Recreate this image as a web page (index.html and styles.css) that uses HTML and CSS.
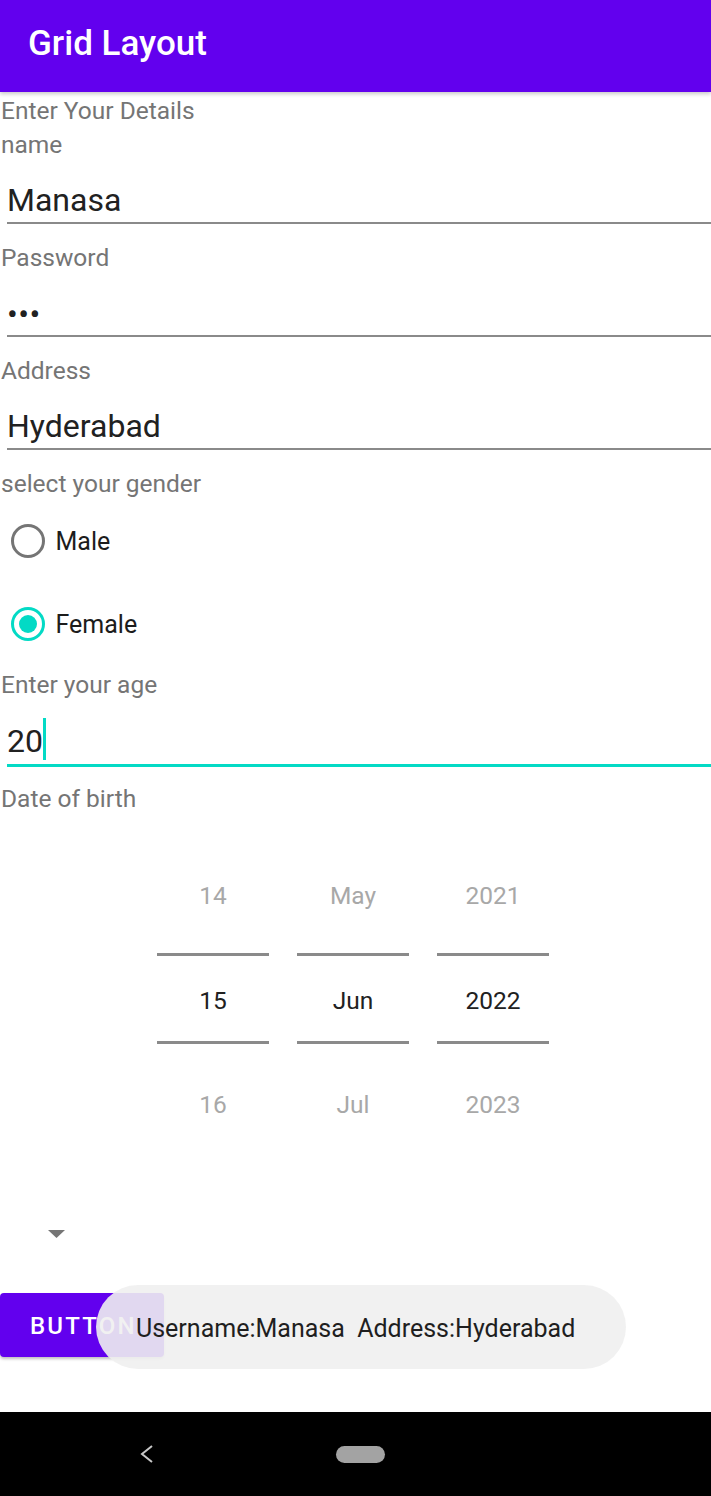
FILE: index.html
```html
<!DOCTYPE html>
<html lang="en">
<head>
<meta charset="utf-8">
<title>Grid Layout</title>
<link rel="stylesheet" href="styles.css">
</head>
<body>
<div class="screen">
  <header class="appbar"><h1 class="title">Grid Layout</h1></header>
  <main class="form">
    <p class="label label-first">Enter Your Details</p>
    <p class="label">name</p>
    <div class="field"><span class="field-text">Manasa</span></div>
    <p class="label">Password</p>
    <div class="field"><span class="field-text dots">•••</span></div>
    <p class="label">Address</p>
    <div class="field"><span class="field-text">Hyderabad</span></div>
    <p class="label">select your gender</p>
    <div class="radio-group">
      <div class="radio"><span class="radio-circle"></span><span class="radio-text">Male</span></div>
      <div class="radio radio-second"><span class="radio-circle checked"></span><span class="radio-text">Female</span></div>
    </div>
    <p class="label">Enter your age</p>
    <div class="field field-focused"><span class="field-text">20</span><span class="cursor"></span></div>
    <p class="label">Date of birth</p>
    <div class="picker">
      <div class="picker-col">
        <div class="cell cell-top">14</div>
        <div class="cell cell-mid">15</div>
        <div class="cell cell-bottom">16</div>
      </div>
      <div class="picker-col">
        <div class="cell cell-top">May</div>
        <div class="cell cell-mid">Jun</div>
        <div class="cell cell-bottom">Jul</div>
      </div>
      <div class="picker-col">
        <div class="cell cell-top">2021</div>
        <div class="cell cell-mid">2022</div>
        <div class="cell cell-bottom">2023</div>
      </div>
    </div>
    <div class="spinner">
      <svg width="17" height="8" viewBox="0 0 17 8"><path d="M0 0 L17 0 L8.5 8 Z" fill="#757575"/></svg>
    </div>
    <div class="actions">
      <div class="btn">BUTTON</div>
      <div class="toast">Username:Manasa&nbsp; Address:Hyderabad</div>
    </div>
  </main>
  <nav class="navbar">
    <svg class="nav-back" width="14" height="20" viewBox="0 0 14 20"><path d="M12 2 L2 10 L12 18" fill="none" stroke="#c8c8c8" stroke-width="2"/></svg>
    <span class="nav-home"></span>
  </nav>
</div>
</body>
</html>
```
FILE: styles.css
```css
html, body {
  margin: 0;
  padding: 0;
  background: #ffffff;
}
.screen {
  width: 711px;
  height: 1496px;
  overflow: hidden;
  font-family: Roboto, "Noto Sans", sans-serif;
  display: flex;
  flex-direction: column;
}
.appbar {
  position: relative;
  z-index: 2;
  height: 92px;
  background: #6200ee;
  box-shadow: 0 2px 4px rgba(0, 0, 0, 0.22);
  flex: none;
}
.title {
  margin: 0;
  padding-left: 28px;
  font-size: 35px;
  font-weight: 500;
  line-height: 87px;
  color: #ffffff;
}
.form {
  flex: none;
}
.label {
  margin: 0;
  height: 34px;
  line-height: 34px;
  font-size: 24.5px;
  color: #757575;
  padding-left: 1px;
}
.label-first {
  margin-top: 2px;
}
.field {
  margin: 0 0 17px 7px;
  padding: 18px 0 2px 0;
  border-bottom: 2px solid #8a8a8a;
  height: 40px;
  line-height: 40px;
  font-size: 32px;
  color: #212121;
}
.field-text {
  margin-left: 0;
}
.dots {
  letter-spacing: 0.5px;
  position: relative;
  top: 1px;
}
.field-focused {
  padding-top: 19px;
  padding-bottom: 3px;
  border-bottom: 3px solid #03dac5;
  margin-bottom: 14.5px;
}
.cursor {
  display: inline-block;
  width: 3px;
  height: 42px;
  margin-top: -6px;
  margin-left: 0;
  background: #03dac5;
  vertical-align: -8px;
}
.radio-group {
  margin-bottom: 4px;
}
.radio {
  height: 80px;
  display: flex;
  align-items: center;
}
.radio-second {
  margin-top: 3px;
}
.radio-circle {
  box-sizing: border-box;
  width: 34px;
  height: 34px;
  margin-left: 10.5px;
  border: 3px solid #757575;
  border-radius: 50%;
  display: flex;
  align-items: center;
  justify-content: center;
}
.radio-circle.checked {
  border-color: #03dac5;
}
.radio-circle.checked::after {
  content: "";
  width: 18px;
  height: 18px;
  border-radius: 50%;
  background: #03dac5;
}
.radio-text {
  margin-left: 11px;
  font-size: 25px;
  line-height: 28px;
  padding-top: 2px;
  color: #1c1c1c;
}
.picker {
  display: flex;
  gap: 28px;
  margin: 28.5px 0 0 157px;
}
.picker-col {
  width: 112px;
  display: flex;
  flex-direction: column;
}
.cell {
  text-align: center;
  font-size: 24.5px;
  color: #a8a8a8;
}
.cell-top {
  line-height: 104px;
  padding-bottom: 5px;
}
.cell-mid {
  border-top: 3px solid #8a8a8a;
  border-bottom: 3px solid #8a8a8a;
  padding-top: 4px;
  line-height: 81px;
  color: #212121;
}
.cell-bottom {
  padding-top: 9px;
  line-height: 104px;
}
.spinner {
  margin: 73px 0 0 48px;
  height: 8px;
  line-height: 0;
}
.actions {
  position: relative;
  margin-top: 55px;
  height: 64px;
}
.btn {
  height: 62px;
  padding-top: 2px;
  line-height: 62px;
  background: #6200ee;
  border-radius: 4px;
  box-shadow: 0 2px 3px rgba(0, 0, 0, 0.25);
  color: #ffffff;
  font-size: 24px;
  font-weight: 500;
  letter-spacing: 2.2px;
  padding-left: 30px;
  box-sizing: content-box;
  width: 134px;
}
.toast {
  position: absolute;
  left: 96px;
  top: -8px;
  width: 490px;
  height: 84px;
  padding-left: 40px;
  border-radius: 42px;
  background: rgba(239, 239, 239, 0.9);
  line-height: 87px;
  font-size: 25px;
  color: #1f1f1f;
  white-space: nowrap;
}
.navbar {
  margin-top: 55px;
  height: 84px;
  background: #000000;
  display: flex;
  align-items: center;
  flex: none;
}
.nav-back {
  margin-left: 140px;
}
.nav-home {
  margin-left: 182px;
  width: 49px;
  height: 17px;
  border-radius: 9px;
  background: #a3a3a3;
}
```
